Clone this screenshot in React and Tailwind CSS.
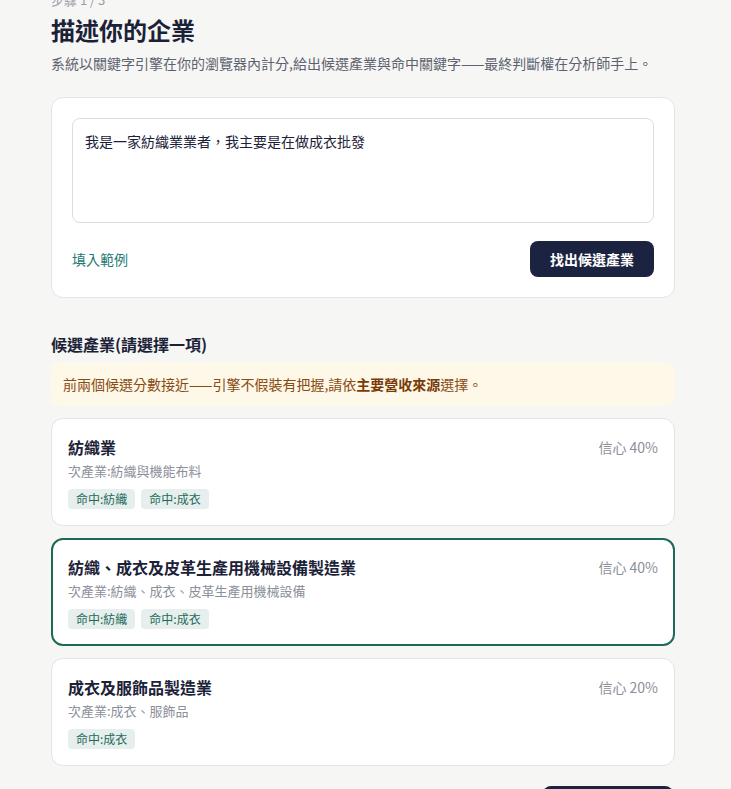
import React, { useState } from 'react'

const candidates = [
  {
    name: '紡織業',
    sub: '次產業:紡織與機能布料',
    score: '信心 40%',
    hits: ['命中:紡織', '命中:成衣'],
  },
  {
    name: '紡織、成衣及皮革生產用機械設備製造業',
    sub: '次產業:紡織、成衣、皮革生產用機械設備',
    score: '信心 40%',
    hits: ['命中:紡織', '命中:成衣'],
  },
  {
    name: '成衣及服飾品製造業',
    sub: '次產業:成衣、服飾品',
    score: '信心 20%',
    hits: ['命中:成衣'],
  },
]

const CandidateCard = ({ item, selected, onPick }) => {
  return (
    <button
      type="button"
      onClick={onPick}
      className={
        selected
          ? 'w-full text-left bg-white rounded-xl border-2 border-[#1d6b55] px-4 py-4'
          : 'w-full text-left bg-white rounded-xl border border-[#e4e4e8] px-4 py-4'
      }
    >
      <div className={selected ? '-mx-px -my-px' : ''}>
        <div className="flex justify-between items-start">
          <div>
            <div className="text-base leading-6 font-bold text-[#1b2238]">{item.name}</div>
            <div className="mt-0.5 text-[13px] leading-5 text-[#8b8f9a]">{item.sub}</div>
          </div>
          <span className="text-sm leading-6 text-[#8b8f9a] shrink-0">{item.score}</span>
        </div>
        <div className="mt-2 flex gap-1.5">
          {item.hits.map((h) => (
            <span
              key={h}
              className="h-5 px-2 rounded bg-[#e6efed] text-xs leading-5 text-[#1f6b5a]"
            >
              {h}
            </span>
          ))}
        </div>
      </div>
    </button>
  )
}

const App = () => {
  const [text, setText] = useState('我是一家紡織業業者，我主要是在做成衣批發')
  const [picked, setPicked] = useState(1)

  return (
    <div
      className="min-h-screen bg-[#f6f6f4] text-[#1b2238]"
      style={{ fontFamily: '"Noto Sans CJK TC", "Noto Sans", sans-serif' }}
    >
      <div className="w-[624px] ml-[51px] -mt-2 pb-10">
        <div className="text-[13px] leading-4 text-[#9a9ea8]">步驟 1 / 3</div>
        <h1 className="mt-1.5 text-2xl leading-8 font-bold text-[#1b2238]">描述你的企業</h1>
        <p className="mt-[7px] text-sm leading-5 text-[#5d6270]">
          系統以關鍵字引擎在你的瀏覽器內計分,給出候選產業與命中關鍵字——最終判斷權在分析師手上。
        </p>

        <div className="mt-6 bg-white rounded-xl border border-[#e4e4e8] p-5">
          <textarea
            value={text}
            onChange={(e) => setText(e.target.value)}
            className="block w-full h-[105px] resize-none rounded-lg border border-[#dcdde2] px-3 py-3 text-sm leading-5 text-[#1b2238] outline-none"
          />
          <div className="mt-[18px] flex items-center justify-between">
            <button type="button" className="text-sm text-[#1f7a72]">填入範例</button>
            <button
              type="button"
              className="h-9 px-5 rounded-lg bg-[#1b2340] text-white text-sm font-bold"
            >
              找出候選產業
            </button>
          </div>
        </div>

        <h2 className="mt-[34px] text-base leading-6 font-bold text-[#1b2238]">候選產業(請選擇一項)</h2>
        <div className="mt-1.5 rounded-lg bg-[#fdf8e7] px-3 py-3 text-sm leading-5 text-[#8a4b12]">
          前兩個候選分數接近——引擎不假裝有把握,請依<b className="font-bold text-[#7a3a08]">主要營收來源</b>選擇。
        </div>

        <div className="mt-3 flex flex-col gap-3">
          {candidates.map((c, i) => (
            <CandidateCard key={c.name} item={c} selected={picked === i} onPick={() => setPicked(i)} />
          ))}
        </div>

        <div className="mt-5 flex justify-end">
          <button
            type="button"
            className="mr-0.5 w-[130px] h-9 rounded-lg bg-[#1b2340] text-white text-sm font-bold"
          >
            下一步
          </button>
        </div>
      </div>
    </div>
  )
}

export default App
